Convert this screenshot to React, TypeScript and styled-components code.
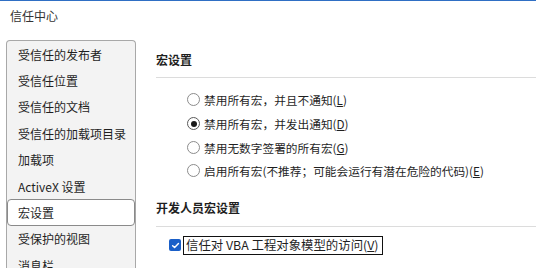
import * as React from 'react';
import styled, { createGlobalStyle } from 'styled-components';

const GlobalStyle = createGlobalStyle`
  html, body {
    margin: 0;
    padding: 0;
    background: #ffffff;
    overflow: hidden;
  }
  body {
    font-family: "Noto Sans CJK SC", "Noto Sans", sans-serif;
    font-size: 12px;
    color: #1f1f1f;
  }
`;

const Window = styled.div`
  width: 536px;
  height: 268px;
  border-top: 1px solid #2f6fc4;
  box-sizing: border-box;
  overflow: hidden;
`;

const TitleBar = styled.div`
  height: 29px;
  display: flex;
  align-items: center;
  padding-left: 10px;
  font-size: 12px;
  color: #333;
`;

const Body = styled.div`
  display: flex;
  padding-top: 10px;
  gap: 20px;
`;

const Sidebar = styled.ul`
  list-style: none;
  margin: 0 0 0 6px;
  padding: 0;
  width: 128px;
  height: 260px;
  border: 1px solid #a8a8a8;
  border-bottom: none;
  border-radius: 4px 4px 0 0;
  background: #f3f3f3;
  flex-shrink: 0;
`;

const NavItem = styled.li<{ $active?: boolean }>`
  height: 26.4px;
  box-sizing: border-box;
  display: flex;
  align-items: center;
  padding-left: 10px;
  font-size: 12px;
  color: #1f1f1f;
  white-space: nowrap;
  background: ${(p) => (p.$active ? '#ffffff' : 'transparent')};
  border: 1px solid ${(p) => (p.$active ? '#8a8a8a' : 'transparent')};
  border-radius: 4px;
`;

const Content = styled.div`
  flex: 1;
  display: flex;
  flex-direction: column;
`;

const SectionHead = styled.div<{ $top?: number }>`
  height: 36px;
  margin-top: ${(p) => p.$top ?? 0}px;
  display: flex;
  align-items: center;
  padding-top: 1px;
  font-weight: 600;
  font-size: 12px;
  border-bottom: 1px solid #dcdcdc;
`;

const RadioGroup = styled.div`
  margin-top: 10px;
  padding-left: 31px;
  display: flex;
  flex-direction: column;
`;

const RadioRow = styled.label`
  height: 23.7px;
  display: flex;
  align-items: center;
  gap: 4px;
  font-size: 11.7px;
  white-space: nowrap;
`;

const RadioCircle = styled.span<{ $on?: boolean }>`
  width: 13px;
  height: 13px;
  box-sizing: border-box;
  border-radius: 50%;
  border: 1px solid ${(p) => (p.$on ? '#5a5a5a' : '#8c8c8c')};
  background: #fff;
  display: flex;
  align-items: center;
  justify-content: center;
  flex-shrink: 0;
  &::after {
    content: '';
    width: 6px;
    height: 6px;
    border-radius: 50%;
    background: ${(p) => (p.$on ? '#1a1a1a' : 'transparent')};
  }
`;

const Punct = styled.span`
  display: inline-block;
  width: 1em;
`;

const CheckRow = styled.div`
  margin-top: 9px;
  margin-left: 13px;
  display: flex;
  align-items: center;
  gap: 2px;
`;

const CheckBox = styled.span`
  width: 12px;
  height: 12px;
  border-radius: 2px;
  background: #1a5fc8;
  display: flex;
  align-items: center;
  justify-content: center;
`;

const FocusLabel = styled.span`
  border: 1.5px solid #111;
  padding: 0 3px 0 2px;
  height: 17px;
  display: flex;
  align-items: center;
  font-size: 12.4px;
  white-space: nowrap;
`;

const Key = styled.span`
  text-decoration: underline;
`;

const navItems = [
  '受信任的发布者',
  '受信任位置',
  '受信任的文档',
  '受信任的加载项目录',
  '加载项',
  'ActiveX 设置',
  '宏设置',
  '受保护的视图',
  '消息栏',
];

const radios = [
  { before: '禁用所有宏', punct: '，', after: '并且不通知', key: 'L' },
  { before: '禁用所有宏', punct: '，', after: '并发出通知', key: 'D', on: true },
  { before: '禁用无数字签署的所有宏', key: 'G' },
  { before: '启用所有宏(不推荐', punct: '；', after: '可能会运行有潜在危险的代码)', key: 'E' },
];

export default function App() {
  return (
    <Window>
      <GlobalStyle />
      <TitleBar>信任中心</TitleBar>
      <Body>
        <Sidebar>
          {navItems.map((n) => (
            <NavItem key={n} $active={n === '宏设置'}>{n}</NavItem>
          ))}
        </Sidebar>
        <Content>
          <SectionHead>宏设置</SectionHead>
          <RadioGroup>
            {radios.map((r) => (
              <RadioRow key={r.key}>
                <RadioCircle $on={r.on} />
                <span>
                  {r.before}
                  {r.punct && <Punct>{r.punct}</Punct>}
                  {r.after}
                  (<Key>{r.key}</Key>)
                </span>
              </RadioRow>
            ))}
          </RadioGroup>
          <SectionHead $top={6}>开发人员宏设置</SectionHead>
          <CheckRow>
            <CheckBox>
              <svg width="9" height="9" viewBox="0 0 10 10">
                <path d="M1.8 5.2 L4 7.3 L8.3 2.8" fill="none" stroke="#fff" strokeWidth="1.6" strokeLinecap="round" strokeLinejoin="round" />
              </svg>
            </CheckBox>
            <FocusLabel>
              信任对 VBA 工程对象模型的访问(<Key>V</Key>)
            </FocusLabel>
          </CheckRow>
        </Content>
      </Body>
    </Window>
  );
}
